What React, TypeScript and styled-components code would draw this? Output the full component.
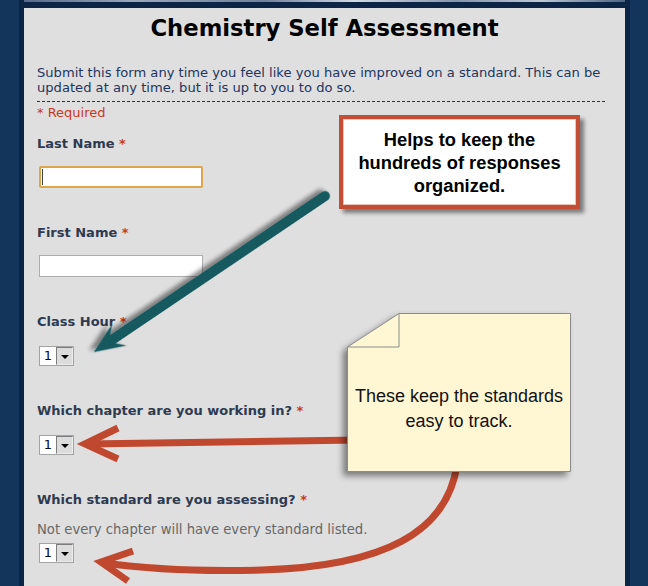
import React from "react";
import styled, { createGlobalStyle } from "styled-components";

const GlobalStyle = createGlobalStyle`
  html, body {
    margin: 0;
    padding: 0;
    background: #13345b;
  }
  body {
    font-family: "DejaVu Sans", Verdana, sans-serif;
  }
`;

const Page = styled.div`
  position: relative;
  width: 648px;
  height: 586px;
  overflow: hidden;
  box-sizing: border-box;
  padding: 0 18px 0 19px;
  background: #13345b;
`;

const Frame = styled.div`
  height: 100%;
  box-sizing: border-box;
  padding: 0 5px;
  background: #0c2546;
`;

const Banner = styled.div`
  height: 2px;
  background: linear-gradient(
    90deg,
    #56698a 0%,
    #9aa8bb 18%,
    #6f819c 40%,
    #d3d9e2 55%,
    #8595ad 72%,
    #c0c8d4 86%,
    #4e6584 100%
  );
`;

const Panel = styled.div`
  margin-top: 6px;
  height: calc(100% - 8px);
  box-sizing: border-box;
  padding: 5px 20px 0 13px;
  background: #dfdfdf;
`;

const Title = styled.h1`
  margin: 0;
  padding-left: 7px;
  font-size: 22.7px;
  line-height: 30px;
  font-weight: bold;
  text-align: center;
  color: #000;
`;

const Description = styled.p`
  margin: 22px 0 0;
  padding-bottom: 6px;
  border-bottom: 1px dashed #1d3560;
  font-size: 13.1px;
  line-height: 15px;
  white-space: nowrap;
  color: #1d3560;
`;

const RequiredNote = styled.div`
  margin-top: 3px;
  font-size: 13px;
  line-height: 15px;
  color: #c8391c;
`;

const Field = styled.div<{ $first?: boolean }>`
  margin-top: ${(p) => (p.$first ? "16px" : "37px")};
`;

const Label = styled.div`
  margin-bottom: 14px;
  font-size: 13px;
  line-height: 16px;
  font-weight: bold;
  color: #2e3a50;
`;

const Star = styled.span`
  color: #c8391c;
`;

const HelpText = styled.div`
  margin: 1px 0 4px;
  font-size: 13.2px;
  line-height: 15px;
  color: #676767;
`;

const InputBox = styled.div<{ $focused?: boolean }>`
  position: relative;
  width: 164px;
  height: 22px;
  margin-left: 2px;
  box-sizing: border-box;
  background: #fff;
  border: ${(p) => (p.$focused ? "2px solid #dda64a" : "1px solid #adadad")};
  border-radius: ${(p) => (p.$focused ? "2px" : "0")};
`;

const Caret = styled.span`
  position: absolute;
  left: 1px;
  top: 1px;
  width: 1px;
  height: 16px;
  background: #444;
`;

const SelectBox = styled.div`
  display: inline-flex;
  margin: 2px 0 0 2px;
  height: 20px;
  box-sizing: border-box;
  border: 1px solid #a3a3a3;
  background: #fff;
`;

const SelectValue = styled.span`
  width: 16px;
  font-size: 13px;
  line-height: 18px;
  text-align: center;
  color: #0a0a20;
`;

const SelectButton = styled.span`
  position: relative;
  width: 17px;
  box-sizing: border-box;
  background: #dcdcdc;
  border: 1px solid;
  border-color: #7c7c7c #ececec #ececec #7c7c7c;

  &::after {
    content: "";
    position: absolute;
    left: 4px;
    top: 7px;
    border-left: 4px solid transparent;
    border-right: 4px solid transparent;
    border-top: 4px solid #000;
  }
`;

const Overlay = styled.div`
  position: absolute;
  inset: 0;
  pointer-events: none;
`;

const ArrowLayer = styled.svg`
  position: absolute;
  left: 0;
  top: 0;
`;

const Callout = styled.div`
  position: absolute;
  left: 339px;
  top: 115px;
  width: 241px;
  height: 94px;
  box-sizing: border-box;
  display: flex;
  align-items: center;
  justify-content: center;
  background: #fff;
  border: 4px solid #c24e36;
  box-shadow: inset 0 0 0 1px #efc3b8, 4px 4px 4px rgba(0, 0, 0, 0.45);
  font-family: "Liberation Sans", Arial, sans-serif;
  font-weight: bold;
  font-size: 18.3px;
  line-height: 23px;
  text-align: center;
  color: #000;
`;

const Note = styled.div`
  position: absolute;
  left: 347px;
  top: 313px;
  width: 224px;
  height: 159px;
`;

const NoteShape = styled.svg`
  position: absolute;
  left: 0;
  top: 0;
  overflow: visible;
  filter: drop-shadow(-4px 4px 3px rgba(0, 0, 0, 0.45));
`;

const NoteText = styled.div`
  position: relative;
  height: 100%;
  box-sizing: border-box;
  padding-top: 32px;
  display: flex;
  align-items: center;
  justify-content: center;
  font-family: "Liberation Sans", Arial, sans-serif;
  font-size: 18px;
  line-height: 25px;
  text-align: center;
  color: #111;
`;

function Select() {
  return (
    <SelectBox>
      <SelectValue>1</SelectValue>
      <SelectButton />
    </SelectBox>
  );
}

function Arrows() {
  const tealLen = 279;
  return (
    <ArrowLayer width={648} height={586} viewBox="0 0 648 586">
      <defs>
        <filter id="arrowShadow" x="-20%" y="-20%" width="140%" height="140%">
          <feDropShadow dx="3" dy="4" stdDeviation="2" floodColor="#000" floodOpacity="0.45" />
        </filter>
      </defs>
      {/* teal arrow to the class hour select */}
      <g filter="url(#arrowShadow)" transform="translate(325 196) rotate(145.97)">
        <line x1={0} y1={0} x2={tealLen - 22} y2={0} stroke="#145a61" strokeWidth={10} strokeLinecap="round" />
        <polygon
          points={`${tealLen},0 ${tealLen - 31},-13 ${tealLen - 23},-5 ${tealLen - 23},5 ${tealLen - 31},13`}
          fill="#145a61"
        />
      </g>
      {/* straight red arrow */}
      <g stroke="#c0482f" fill="none" strokeWidth={7}>
        <line x1={360} y1={440} x2={88} y2={444} />
        <polyline points="118,428 85,444 118,459" strokeLinejoin="miter" />
      </g>
      {/* curved red arrow */}
      <g stroke="#c0482f" fill="none" strokeWidth={7}>
        <path d="M457 465 C447 532 385 566 262 570 C190 572 140 568 104 563" />
        <polyline points="133,551 101,562 128,581" strokeLinejoin="miter" />
      </g>
    </ArrowLayer>
  );
}

export default function App() {
  return (
    <>
      <GlobalStyle />
      <Page>
        <Frame>
          <Banner />
          <Panel>
            <Title>Chemistry Self Assessment</Title>
            <Description>
              Submit this form any time you feel like you have improved on a standard. This can be
              <br />
              updated at any time, but it is up to you to do so.
            </Description>
            <RequiredNote>* Required</RequiredNote>

            <Field $first>
              <Label>
                Last Name <Star>*</Star>
              </Label>
              <InputBox $focused>
                <Caret />
              </InputBox>
            </Field>

            <Field>
              <Label>
                First Name <Star>*</Star>
              </Label>
              <InputBox />
            </Field>

            <Field>
              <Label>
                Class Hour <Star>*</Star>
              </Label>
              <Select />
            </Field>

            <Field>
              <Label>
                Which chapter are you working in? <Star>*</Star>
              </Label>
              <Select />
            </Field>

            <Field>
              <Label>
                Which standard are you assessing? <Star>*</Star>
              </Label>
              <HelpText>Not every chapter will have every standard listed.</HelpText>
              <Select />
            </Field>
          </Panel>
        </Frame>

        <Overlay>
          <Arrows />
          <Callout>
            Helps to keep the
            <br />
            hundreds of responses
            <br />
            organized.
          </Callout>
          <Note>
            <NoteShape width={224} height={159} viewBox="0 0 224 159">
              <polygon points="0.5,34 52,0.5 223.5,0.5 223.5,158.5 0.5,158.5" fill="#fff7d4" stroke="#8c8c8c" />
              <polyline points="52,0.5 52,34 0.5,34" fill="none" stroke="#8c8c8c" />
            </NoteShape>
            <NoteText>
              These keep the standards
              <br />
              easy to track.
            </NoteText>
          </Note>
        </Overlay>
      </Page>
    </>
  );
}
